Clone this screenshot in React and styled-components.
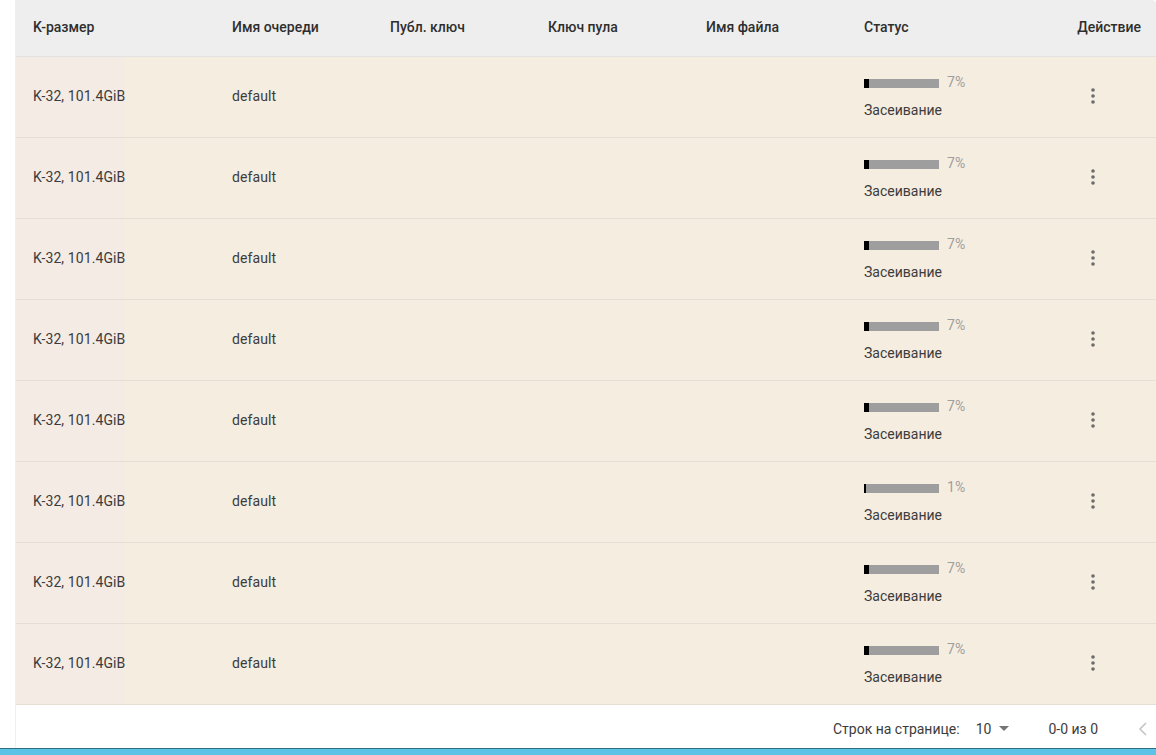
import React from 'react';
import styled, { createGlobalStyle } from 'styled-components';

const GlobalStyle = createGlobalStyle`
  html, body {
    margin: 0;
    padding: 0;
    background: #ffffff;
    font-family: Roboto, "Liberation Sans", sans-serif;
    color: #333333;
  }
`;

const Page = styled.div`
  display: flex;
  flex-direction: column;
  width: 1156px;
  height: 755px;
  overflow: hidden;
`;

const Main = styled.div`
  display: flex;
  flex: 1;
`;

const Gutter = styled.div`
  width: 15px;
  border-right: 1px solid #f0f0f0;
  background: #ffffff;
`;

const Table = styled.div`
  flex: 1;
  display: flex;
  flex-direction: column;
`;

const cols = '199px 158px 158px 158px 158px 200px 1fr';

const HeaderRow = styled.div`
  display: grid;
  grid-template-columns: ${cols};
  height: 56px;
  background: #eeeeee;
  border-bottom: 1px solid #e2e2e2;
  border-top-right-radius: 4px;
`;

const HeadCell = styled.div`
  display: flex;
  align-items: center;
  justify-content: ${({ $right }) => ($right ? 'flex-end' : 'flex-start')};
  padding: ${({ $right }) => ($right ? '0 15px 2px 0' : '0 0 2px 17px')};
  font-size: 14px;
  font-weight: 500;
  color: #2e2e2e;
`;

const Row = styled.div`
  display: grid;
  grid-template-columns: ${cols};
  height: 80px;
  background: #f5ede0;
  border-bottom: 1px solid #e6ded4;
`;

const Cell = styled.div`
  display: flex;
  align-items: center;
  padding: 0 0 3px 17px;
  font-size: 14px;
  letter-spacing: 0.1px;
  color: #3c3c3c;
  background: ${({ $tint }) => ($tint ? 'linear-gradient(to right, #f4ebe5 0, #f4ebe5 109px, transparent 109px)' : 'transparent')};
`;

const StatusCell = styled.div`
  display: flex;
  flex-direction: column;
  justify-content: center;
  gap: 11px;
  padding: 0 0 1px 17px;
`;

const BarLine = styled.div`
  display: flex;
  align-items: center;
  gap: 8px;
  height: 16px;
`;

const Bar = styled.div`
  width: 75px;
  height: 9px;
  background: #9e9e9e;
  display: flex;
`;

const BarFill = styled.div`
  height: 100%;
  background: #000000;
`;

const Percent = styled.span`
  font-size: 14px;
  color: #9e9e9e;
  margin-top: -2px;
`;

const StatusText = styled.span`
  font-size: 14px;
  color: #3c3c3c;
  line-height: 16px;
`;

const ActionCell = styled.div`
  display: flex;
  align-items: center;
  justify-content: flex-end;
  padding: 0 51px 3px 0;
`;

const Kebab = styled.button`
  width: 24px;
  height: 24px;
  border: 0;
  padding: 0;
  background: transparent;
  display: flex;
  align-items: center;
  justify-content: center;
  color: #6b6b6b;
`;

const Footer = styled.div`
  display: flex;
  align-items: center;
  justify-content: flex-end;
  height: 43px;
  padding-top: 4px;
  box-sizing: border-box;
  background: #ffffff;
  font-size: 14px;
  color: #3c3c3c;
`;

const RowsLabel = styled.span`
  margin-right: 16px;
`;

const Select = styled.div`
  display: flex;
  align-items: center;
  gap: 8px;
  margin-right: 39px;
`;

const Range = styled.span`
  margin-right: 40px;
`;

const Prev = styled.div`
  display: flex;
  align-items: center;
  color: #c4c4c4;
  margin-right: 8px;
`;

const Taskbar = styled.div`
  height: 6px;
  background: #5cc3e6;
  border-top: 1px solid #2f6f86;
`;

const rows = [7, 7, 7, 7, 7, 1, 7, 7];

const headers = ['K-размер', 'Имя очереди', 'Публ. ключ', 'Ключ пула', 'Имя файла', 'Статус'];

const KebabIcon = () => (
  <svg width="4" height="16" viewBox="0 0 4 16">
    <circle cx="2" cy="2" r="1.8" fill="currentColor" />
    <circle cx="2" cy="8" r="1.8" fill="currentColor" />
    <circle cx="2" cy="14" r="1.8" fill="currentColor" />
  </svg>
);

const App = () => (
  <Page>
    <GlobalStyle />
    <Main>
      <Gutter />
      <Table>
        <HeaderRow>
          {headers.map(h => <HeadCell key={h}>{h}</HeadCell>)}
          <HeadCell $right>Действие</HeadCell>
        </HeaderRow>
        {rows.map((p, i) => (
          <Row key={i}>
            <Cell $tint>K-32, 101.4GiB</Cell>
            <Cell>default</Cell>
            <Cell />
            <Cell />
            <Cell />
            <StatusCell>
              <BarLine>
                <Bar>
                  <BarFill style={{ width: `${p === 1 ? 2 : 5}px` }} />
                </Bar>
                <Percent>{p}%</Percent>
              </BarLine>
              <StatusText>Засеивание</StatusText>
            </StatusCell>
            <ActionCell>
              <Kebab aria-label="Действие"><KebabIcon /></Kebab>
            </ActionCell>
          </Row>
        ))}
        <Footer>
          <RowsLabel>Строк на странице:</RowsLabel>
          <Select>
            <span>10</span>
            <svg width="10" height="5" viewBox="0 0 10 5">
              <path d="M0 0 L10 0 L5 5 Z" fill="#757575" />
            </svg>
          </Select>
          <Range>0-0 из 0</Range>
          <Prev>
            <svg width="10" height="14" viewBox="0 0 10 14">
              <path d="M8 1 L2 7 L8 13" fill="none" stroke="currentColor" strokeWidth="1.6" />
            </svg>
          </Prev>
        </Footer>
      </Table>
    </Main>
    <Taskbar />
  </Page>
);

export default App;
